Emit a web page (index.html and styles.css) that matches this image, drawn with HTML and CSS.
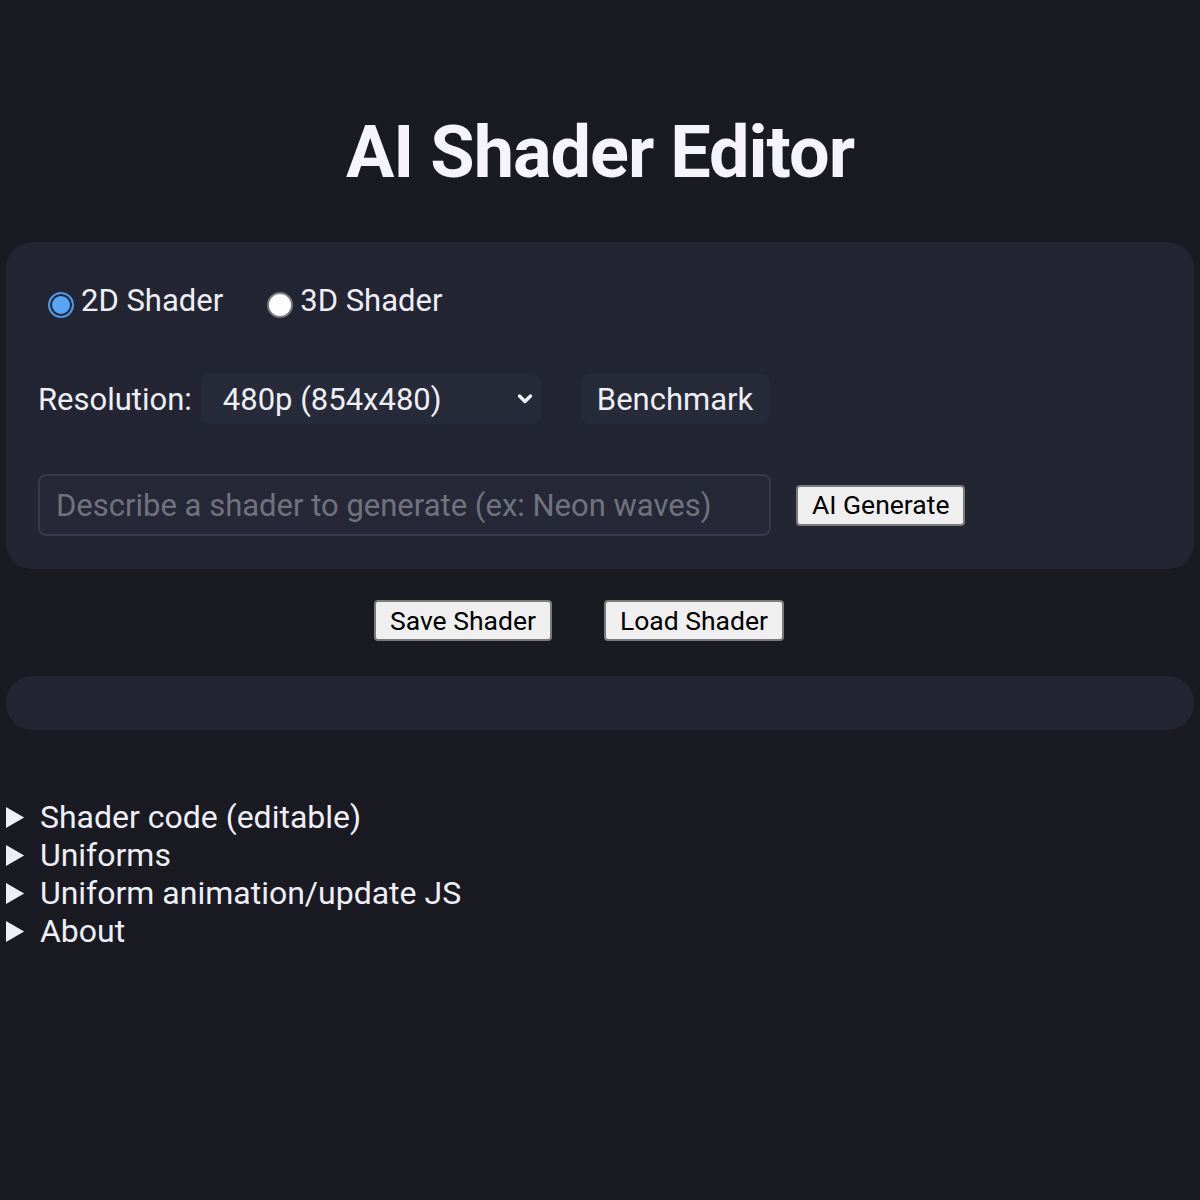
FILE: index.html
```html
<!DOCTYPE html>
<html lang="en">
<head>
<meta charset="utf-8">
<title>AI Shader Editor</title>
<link rel="stylesheet" href="styles.css">
</head>
<body>
<h1 class="title">AI Shader Editor</h1>

<section class="panel controls">
  <div class="mode-row">
    <label class="mode"><input type="radio" name="mode" checked><span>2D Shader</span></label>
    <label class="mode"><input type="radio" name="mode"><span>3D Shader</span></label>
  </div>

  <div class="res-row">
    <label class="res-label" for="res">Resolution:</label>
    <div class="select-wrap">
      <select id="res" class="res-select">
        <option>480p (854x480)</option>
      </select>
      <svg class="chev" viewBox="0 0 16 12" width="16" height="12"><path d="M2.5 3 L8 8.5 L13.5 3" fill="none" stroke="#f0f0f5" stroke-width="3.4" stroke-linecap="round" stroke-linejoin="round"/></svg>
    </div>
    <button class="dark-btn">Benchmark</button>
  </div>

  <div class="gen-row">
    <input class="prompt" type="text" placeholder="Describe a shader to generate (ex: Neon waves)">
    <button class="plain-btn">AI Generate</button>
  </div>
</section>

<div class="file-row">
  <button class="plain-btn">Save Shader</button>
  <button class="plain-btn">Load Shader</button>
</div>

<section class="panel status"></section>

<div class="sections">
  <details><summary>Shader code (editable)</summary></details>
  <details><summary>Uniforms</summary></details>
  <details><summary>Uniform animation/update JS</summary></details>
  <details><summary>About</summary></details>
</div>
</body>
</html>
```

FILE: styles.css
```css
html, body {
  background: #191a22;
}
body {
  margin: 0;
  padding: 0 6px;
  font-family: Roboto, "Liberation Sans", sans-serif;
  font-size: 32px;
  color: #eeeff5;
}
.title {
  margin: 109px 0 46px;
  font-size: 72px;
  font-weight: 700;
  line-height: 87px;
  letter-spacing: -1px;
  text-align: center;
  color: #f4f4fa;
}
.panel {
  background: #232533;
  border-radius: 26px;
}
.controls {
  padding: 40px 32px 33px;
  font-size: 31px;
}
.mode-row {
  display: flex;
  align-items: center;
  gap: 34px;
  line-height: 38px;
}
.mode {
  display: flex;
  align-items: center;
}
.mode input {
  appearance: none;
  -webkit-appearance: none;
  width: 26px;
  height: 26px;
  margin: 8px 7px 0 10px;
  border-radius: 50%;
  border: 2px solid #7a7a7a;
  background: #ffffff;
  box-sizing: border-box;
}
.mode input:checked {
  background: #56a5f6;
  border: 2px solid #4b97e6;
  box-shadow: inset 0 0 0 2px #232533;
}
.res-row {
  display: flex;
  align-items: center;
  margin-top: 54px;
}
.res-label {
  margin-right: 9px;
}
.select-wrap {
  position: relative;
  margin-right: 40px;
}
.res-select {
  appearance: none;
  -webkit-appearance: none;
  width: 340px;
  height: 50px;
  padding: 0 22px;
  border: none;
  border-radius: 8px;
  background: #272a39;
  color: #eeeff5;
  font: inherit;
}
.chev {
  position: absolute;
  right: 8px;
  top: 19px;
}
.dark-btn {
  height: 50px;
  padding: 0 16px;
  border: none;
  border-radius: 8px;
  background: #272a39;
  color: #eeeff5;
  font: inherit;
}
.gen-row {
  display: flex;
  align-items: center;
  margin-top: 50px;
}
.prompt {
  width: 733px;
  height: 62px;
  box-sizing: border-box;
  padding: 0 16px;
  border: 2px solid #363948;
  border-radius: 8px;
  background: #262837;
  color: #eeeff5;
  font: inherit;
  margin-right: 25px;
}
.prompt::placeholder {
  color: #70737d;
}
.plain-btn {
  height: 41px;
  padding: 0 14px;
  border: 2px solid #7a7a7a;
  border-radius: 4px;
  background: #efefef;
  color: #000;
  font-family: Roboto, "Liberation Sans", sans-serif;
  font-size: 26.5px;
  line-height: 36px;
}
.file-row {
  display: flex;
  justify-content: center;
  gap: 52px;
  padding-right: 42px;
  margin-top: 31px;
}
.status {
  height: 54px;
  margin-top: 35px;
}
.sections {
  margin-top: 68px;
  line-height: 38px;
}
.sections summary {
  cursor: pointer;
}
```
